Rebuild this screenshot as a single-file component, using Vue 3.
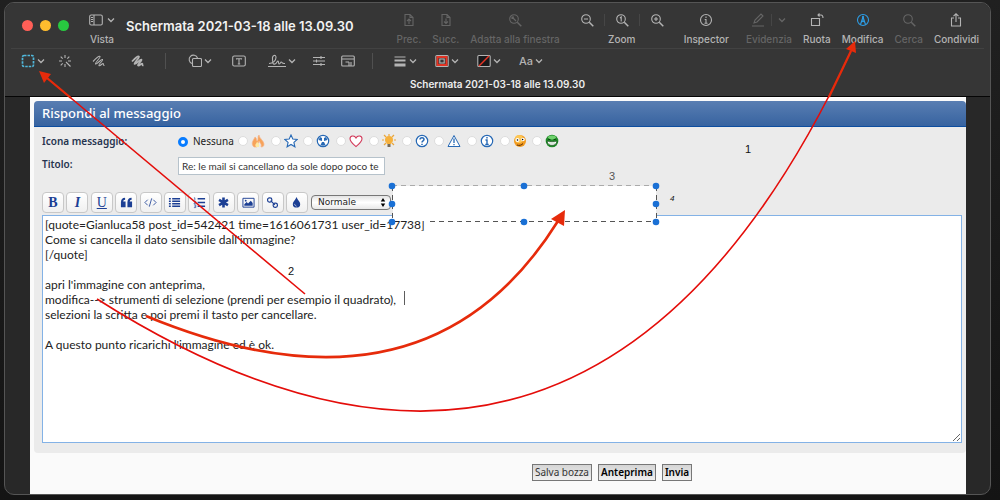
<script setup>
import { ref } from 'vue'

const selected = ref('none')
const title = ref('Re: le mail si cancellano da sole dopo poco te')
const size = ref('Normale')
const message = ref(`[quote=Gianluca58 post_id=542421 time=1616061731 user_id=17738]
Come si cancella il dato sensibile dall'immagine?
[/quote]

apri l'immagine con anteprima,
modifica--> strumenti di selezione (prendi per esempio il quadrato),
selezioni la scritta e poi premi il tasto per cancellare.

A questo punto ricarichi l'immagine ed è ok.`)

const blue = '#2769b5'
const ring = `<circle cx="7" cy="7" r="5.7" fill="#fff" stroke="${blue}" stroke-width="1.2"/>`
const topics = [
  { name: 'Fuoco', art: '<path d="M3 13C-1 9 3 6 4 3c2 1 1 3 2 4 2-1 0-4 2-6 0 3 5 6 5 9 0 2-1 3-3 3 1-3-1-4-2-6 0 3-3 3-2 6z" fill="#f7a35a" stroke="#f6b48a" stroke-width=".7"/><path d="M5 13c-2-3 1-3 1-6 1 3 3 3 2 6z" fill="#fde9a0"/>' },
  { name: 'Stella', art: `<path d="M7 1l1.800 4 4.400.4-3.300 3 1 4.400L7 10.500l-3.900 2.300 1-4.400-3.300-3L5.200 5z" fill="#fff" stroke="${blue}" stroke-width="1.1"/>` },
  { name: 'Radioattivo', art: `${ring}<path d="M2.500 6l1.500-3 2 1v3zM11.500 6L10 3 8 4v3zM4.500 11L6 8h2l1.500 3-2.500.8z" fill="${blue}"/>` },
  { name: 'Cuore', art: '<path d="M7 12.500C4 10 1 8 1 4.800 1 1.500 5.500 1 7 4c1.500-3 6-2.500 6 .8C13 8 10 10 7 12.500z" fill="#fff" stroke="#d23a5a" stroke-width="1.1"/>' },
  { name: 'Idea', art: '<path d="M7 0v2M0 6h2m10 0h2M2 1l2 2m8-2l-2 2M2 11l2-2m8 2l-2-2" stroke="#e9a63c" stroke-width="1.200"/><path d="M5 10C4 8 3 8 3 6a4 4 0 018 0c0 2-1 2-2 4z" fill="#f6b13c"/><path d="M5.500 10h3v3h-3z" fill="#776c59"/>' },
  { name: 'Domanda', art: `${ring}<path d="M5 5.500c0-2.500 4-2.500 4 0C9 7 7 6.800 7 8.500M7 9.800v1.200" fill="none" stroke="${blue}" stroke-width="1.500"/>` },
  { name: 'Attenzione', art: `<path d="M7 1.500L13 12.500H1z" fill="#fff" stroke="${blue}" stroke-width="1"/><path d="M7 4.500v4.500M7 10v1.200" stroke="${blue}" stroke-width="1.300"/>` },
  { name: 'Informazione', art: `${ring}<path d="M7 3v1.500M5.500 6H7v4.500M5.300 10.500h3.400" fill="none" stroke="${blue}" stroke-width="1.400"/>` },
  { name: 'Occhiolino', art: '<circle cx="7" cy="7" r="6" fill="#f19a1f"/><circle cx="6" cy="5" r="4" fill="#fdc757"/><circle cx="4.500" cy="6" r="2" fill="#fff"/><circle cx="10" cy="5.500" r="1.800" fill="#fff"/><circle cx="4.500" cy="6" r=".8"/><circle cx="9.600" cy="5.500" r=".8"/><path d="M4 11c2 1 5 0 6-1.500" stroke="#5a2d05" fill="none"/>' },
  { name: 'Sorriso verde', art: '<circle cx="7" cy="7" r="6.300" fill="#1f8a28"/><ellipse cx="7" cy="3.500" rx="4" ry="2" fill="#6fd16d"/><path d="M3 5l2.500.7M11 5l-2.500.7" stroke="#083b0b"/><path d="M2 7c3 .8 7 .8 10 0-.5 6-9.500 6-10 0z" fill="#fff" stroke="#0b4710" stroke-width=".7"/><path d="M5 7.500v3.500M7 7.500v4M9 7.500v3.500" stroke="#7ba07d" stroke-width=".5"/>' }
]

const navy = '#1c3f94'
const tools = [
  { name: 'Grassetto', text: 'B', cls: 'b' },
  { name: 'Corsivo', text: 'I', cls: 'i' },
  { name: 'Sottolineato', text: 'U', cls: 'u' },
  { name: 'Citazione', art: `<path d="M1 7c0-3 1.500-5 4.500-5v2C4 4 3.500 5 3.500 6H6v6H1zM8 7c0-3 1.500-5 4.500-5v2C11 4 10.500 5 10.500 6H13v6H8z" fill="${navy}"/>` },
  { name: 'Codice', art: `<path d="M4 4L1 7l3 3M10 4l3 3-3 3M8.300 2.500l-2.600 9" fill="none" stroke="${navy}" stroke-width=".9"/>` },
  { name: 'Elenco', art: `<path d="M1 3h2M1 5.700h2M1 8.400h2M1 11h2M4.500 3H13M4.500 5.700H13M4.500 8.400H13M4.500 11H13" stroke="${navy}" stroke-width="1.500"/>` },
  { name: 'Elenco numerato', art: `<path d="M5 3h8M5 7h8M5 11h8" stroke="${navy}" stroke-width="1.700"/><path d="M1 2h1v3M1 6h2L1 8h2M1 9.500h2v3H1M1.500 11H3" stroke="${navy}" stroke-width=".7" fill="none"/>` },
  { name: 'Elemento', art: `<path d="M7 1.500v11M2.200 4.200l9.600 5.600M2.200 9.800l9.600-5.600" stroke="${navy}" stroke-width="2.800"/>` },
  { name: 'Immagine', art: `<path d="M1 2.500h12v9.500H1z" fill="none" stroke="${navy}"/><path d="M2.500 10.500V9L5 6.500 6.500 8 9.500 5l2 2.500v3z" fill="${navy}"/><circle cx="4" cy="5" r="1" fill="${navy}"/>` },
  { name: 'Collegamento', art: `<g fill="none" stroke="${navy}" stroke-width="1.300"><rect x="1.700" y="2" width="4.600" height="4.600" rx="2"/><rect x="7.700" y="7.700" width="4.600" height="4.600" rx="2"/><path d="M5 5l4.500 4.500"/></g>` },
  { name: 'Colore', art: `<path d="M7 1c1 3 4 5 4 7.500a4 4 0 01-8 0C3 6 6 4 7 1z" fill="${navy}"/><path d="M5 8.500C5 10 6 10.500 7 11" stroke="#fff" stroke-width=".7" fill="none"/>` }
]

const page = '<path d="M3 1.500h5l3 3v8H3zM8 1.500v3h3"/>'
const glass = '<circle cx="6" cy="6" r="4.300"/><path d="M9.300 9.300l4 4" stroke-width="1.500"/>'
const actions = [
  { label: 'Prec.', off: true, art: page + '<path d="M7 11V6M5 8l2-2 2 2"/>' },
  { label: 'Succ.', off: true, art: page + '<path d="M7 5.500v5M5 8.500l2 2 2-2"/>' },
  { label: 'Adatta alla finestra', off: true, art: glass + '<path d="M4 4l4 4M4 6V4h2"/>', cls: 'fit' }
]
const later = [
  { label: 'Ruota', art: '<path d="M1.500 5.500h8v7h-8zM8 2h3q2 0 2 3M9.500.5L8 2l1.500 1.500" />' },
  { label: 'Modifica', accent: true, art: '<circle cx="7" cy="7" r="5.500"/><path d="M4.500 11.500L7 4l2.500 7.500M5.500 9l1.500-1 1.500 1"/><path d="M7 3v3.500" stroke-width="1.600"/>' },
  { label: 'Cerca', off: true, art: glass },
  { label: 'Condividi', art: '<path d="M5 5H2.500v8h9V5H9M7 9V1M4.500 3.200L7 .8l2.500 2.400"/>' }
]

const scribble = 'M1 7.500C4 4.500 7 1.500 8 2.500S2.500 9 3.500 10 9.500 4.500 10.500 5.500 6 10.500 7 11.500s3-2 4-2-.5 2 1.500 2'
const markup = [
  { name: 'Selezione', menu: true, cls: 'first', art: '<rect x="1.500" y="1.500" width="11" height="11" rx="1.500" stroke="#50b7da" stroke-width="1.700" stroke-dasharray="2.500 1"/>' },
  { name: 'Alfa istantaneo', cls: 'wand', art: '<path d="M7 1v3M7 10v3M1 7h3M10 7h3M2.700 2.700l2 2M2.700 11.300l2-2M11.300 2.700l-2 2M8 8l4.500 4.500"/>' },
  { name: 'Schizzo', cls: 'sketch', art: `<path d="${scribble}"/>` },
  { name: 'Disegno', cls: 'marker', art: `<path d="${scribble}" stroke-width="1.700"/>` },
  { divider: true },
  { name: 'Forme', menu: true, cls: 'shapes', art: '<path d="M4 9.500A4.300 4.300 0 119.500 4"/><rect x="4.500" y="4.500" width="9" height="8" rx="1"/>' },
  { name: 'Testo', art: '<rect x=".7" y="2" width="12.600" height="10" rx="1.500"/><path d="M4.500 5.500V4.800h5v.7M7 5v5M5.800 10h2.400" />' },
  { name: 'Firma', menu: true, cls: 'sign', box: '0 0 18 14', art: '<path d="M1 9.500c4 0 7-3 7-6C8 0 4 1 4.500 5c.3 3 0 6 2.500 5 2-1 2-3 3-3s0 3 1.300 3 1-2 2-2 .2 2 3.700 1.500M0 12.500h18"/>' },
  { name: 'Regola colore', art: '<path d="M1 3.500h12M1 7h12M1 10.500h12M9 2v3M4.500 5.500v3M9 9v3"/>' },
  { name: 'Dimensioni', cls: 'dims', art: '<rect x=".7" y="2" width="12.600" height="10" rx="1"/><path d="M1 5h12M4.500 8H8M8 8v4M10 8v4"/>' },
  { divider: true },
  { name: 'Stile linea', menu: true, art: '<path d="M1.500 3h11" stroke-width="1"/><path d="M1.500 6.500h11" stroke-width="2"/><path d="M1.500 11h11" stroke-width="3"/>' },
  { name: 'Colore bordo', menu: true, art: '<rect x=".8" y="1.500" width="12.400" height="11" rx="1"/><rect x="2.500" y="3" width="9" height="8" stroke="#e83323" stroke-width="1.900"/><rect x="4.800" y="5" width="4.400" height="4"/>' },
  { name: 'Colore riempimento', menu: true, art: '<rect x=".8" y="1.500" width="12.400" height="11" rx="1" fill="#18191b"/><path d="M2 12L12 2" stroke="#e83323" stroke-width="1.500"/>' },
  { name: 'Stile testo', menu: true, text: 'Aa' }
]

const handles = [[392, 186], [524, 186], [656, 186], [392, 204], [656, 204], [392, 222], [524, 222], [656, 222]]
</script>

<template>
  <div class="desktop">
    <main class="window">
      <header class="chrome">
        <div class="titlebar">
          <div class="lights">
            <button class="light red" aria-label="Chiudi"></button>
            <button class="light yellow" aria-label="Riduci"></button>
            <button class="light green" aria-label="Ingrandisci"></button>
          </div>
          <button class="action view">
            <span class="glyphs">
              <svg class="ico" viewBox="0 0 14 14"><rect x=".7" y="2" width="12.600" height="10" rx="1.500" /><path d="M5 2v10M2 4.500h2M2 6.500h2M2 8.500h2" /></svg>
              <svg class="chev" viewBox="0 0 8 8"><path d="M1 2.500l3 3 3-3" /></svg>
            </span>
            <span>Vista</span>
          </button>
          <h1>Schermata 2021-03-18 alle 13.09.30</h1>
          <div class="actions">
            <button v-for="a in actions" :key="a.label" class="action" :class="[{ off: a.off }, a.cls]">
              <span class="glyphs"><svg class="ico" viewBox="0 0 14 14" v-html="a.art"></svg></span>
              <span>{{ a.label }}</span>
            </button>
            <div class="action zoom">
              <span class="glyphs">
                <button aria-label="Riduci zoom"><svg class="ico" viewBox="0 0 14 14" v-html="glass + '<path d=&quot;M4 6h4&quot;/>'"></svg></button>
                <i></i>
                <button aria-label="Dimensione reale"><svg class="ico" viewBox="0 0 14 14" v-html="glass + '<path d=&quot;M5 5l1.200-1v4.500&quot;/>'"></svg></button>
                <i></i>
                <button aria-label="Aumenta zoom"><svg class="ico" viewBox="0 0 14 14" v-html="glass + '<path d=&quot;M4 6h4M6 4v4&quot;/>'"></svg></button>
              </span>
              <span>Zoom</span>
            </div>
            <button class="action inspector">
              <span class="glyphs"><svg class="ico" viewBox="0 0 14 14"><circle cx="7" cy="7" r="5.500" /><path d="M7 3.500V5M5.700 6.500H7V10M5.500 10.200h3" /></svg></span>
              <span>Inspector</span>
            </button>
            <button class="action off mark">
              <span class="glyphs">
                <svg class="ico" viewBox="0 0 14 14"><path d="M3 10l1-3 6-6 2 2-6 6zM1 13h12" /></svg>
                <i></i>
                <svg class="chev" viewBox="0 0 8 8"><path d="M1 2.500l3 3 3-3" /></svg>
              </span>
              <span>Evidenzia</span>
            </button>
            <button v-for="a in later" :key="a.label" class="action" :class="{ off: a.off, accent: a.accent }">
              <span class="glyphs"><svg class="ico" viewBox="0 0 14 14" v-html="a.art"></svg></span>
              <span>{{ a.label }}</span>
            </button>
          </div>
        </div>
        <div class="markup">
          <template v-for="(m, n) in markup" :key="n">
            <i v-if="m.divider" class="divider"></i>
            <button v-else :class="m.cls" :aria-label="m.name">
              <span v-if="m.text">{{ m.text }}</span>
              <svg v-else class="ico" :viewBox="m.box || '0 0 14 14'" v-html="m.art"></svg>
              <svg v-if="m.menu" class="chev" viewBox="0 0 8 8"><path d="M1 2.500l3 3 3-3" /></svg>
            </button>
          </template>
        </div>
        <p class="docname">Schermata 2021-03-18 alle 13.09.30</p>
      </header>

      <form class="sheet" @submit.prevent>
        <section class="panel">
          <h2>Rispondi al messaggio</h2>
          <div class="fields">
            <div class="row icons" role="radiogroup" aria-labelledby="icon-label">
              <span id="icon-label" class="name">Icona messaggio:</span>
              <label class="none"><input v-model="selected" type="radio" name="icon" value="none" />Nessuna</label>
              <div class="topics">
                <label v-for="t in topics" :key="t.name">
                  <input v-model="selected" type="radio" name="icon" :value="t.name" :aria-label="t.name" />
                  <svg viewBox="0 0 14 14" v-html="t.art"></svg>
                </label>
              </div>
            </div>
            <div class="row subject">
              <label class="name" for="subject">Titolo:</label>
              <input id="subject" v-model="title" type="text" />
            </div>
            <div class="editor-bar">
              <div class="tools">
                <button v-for="t in tools" :key="t.name" type="button" :class="t.cls" :aria-label="t.name">
                  <template v-if="t.text">{{ t.text }}</template>
                  <svg v-else viewBox="0 0 14 14" v-html="t.art"></svg>
                </button>
              </div>
              <label class="size">
                <select v-model="size" aria-label="Dimensione testo"><option>Normale</option></select>
                <svg viewBox="0 0 6 10"><path d="M3 0l2.500 4h-5zM3 10l2.500-4h-5z" /></svg>
              </label>
            </div>
            <textarea v-model="message" aria-label="Messaggio" spellcheck="false"></textarea>
          </div>
        </section>
        <div class="submit">
          <button type="button">Salva bozza</button>
          <button type="button" class="strong">Anteprima</button>
          <button type="submit" class="strong">Invia</button>
        </div>
      </form>
    </main>

    <svg class="notes" viewBox="0 0 1000 500" width="1000" height="500" aria-hidden="true">
      <rect x="393" y="186" width="263" height="35" fill="#fff" />
      <path d="M392 185.500h265" stroke="#aaa" stroke-dasharray="5 4" />
      <path d="M430 221.500h227M392.500 186v36M656.500 186v36" stroke="#555" stroke-dasharray="5 4" />
      <circle v-for="(h, n) in handles" :key="n" :cx="h[0]" :cy="h[1]" r="3.300" fill="#1a70d5" />
      <path d="M404.500 291v14" stroke="#333" stroke-width=".8" />
      <path d="M305 294L47 78" stroke="#e40d0a" stroke-width="1.600" />
      <path d="M71 98L47 78" stroke="#e62b0b" stroke-width="2.200" />
      <path d="M39 71l12 3-7 9z" fill="#e62b0b" />
      <path d="M97 299Q590 612 851 51" fill="none" stroke="#e40d0a" stroke-width="1.600" />
      <path d="M829 97L851 51" stroke="#e62b0b" stroke-width="2.200" />
      <path d="M855 41l-9 8 10 4z" fill="#e62b0b" />
      <path d="M146 316Q426 432 558 221" fill="none" stroke="#e62b0b" stroke-width="2.600" />
      <path d="M565 210l-14 9 13 7z" fill="#e62b0b" />
      <g class="digits">
        <text x="745" y="153">1</text>
        <text x="288" y="275">2</text>
        <text x="609" y="180" class="faint">3</text>
        <text x="670" y="201" class="small">4</text>
      </g>
    </svg>
  </div>
</template>

<style>
html, body { margin: 0; background: #1b1b1b; }
</style>

<style scoped>
* { box-sizing: border-box; }
button { margin: 0; padding: 0; border: 0; background: none; color: inherit; font: inherit; }
.desktop { position: relative; min-height: 100vh; padding: 2px 9px 5px 4px; display: flex; background: linear-gradient(#202020, #141414); overflow: hidden; }
.window { flex: 1; display: flex; flex-direction: column; border: 1px solid #555; border-radius: 10px; background: #282828; overflow: hidden; }
.chrome { background: #363636; color: #b4b4b4; font: 500 10px/12px Inter, "Liberation Sans", sans-serif; border-bottom: 1px solid #050505; }
.titlebar { display: flex; align-items: center; height: 45px; padding: 0 11px 0 17px; }
.lights { display: flex; gap: 7px; }
.light { width: 11px; height: 11px; border-radius: 50%; }
.red { background: #ff5f57; }
.yellow { background: #febc2e; }
.green { background: #28c840; }
.action { display: flex; flex-direction: column; align-items: center; gap: 6px; white-space: nowrap; }
.view { margin-left: 20px; }
.glyphs { display: flex; align-items: center; gap: 4px; height: 14px; }
.titlebar .action { padding-top: 7px; }
.ico { width: 14px; height: 14px; fill: none; stroke: currentColor; stroke-width: 1.1; display: block; }
.chev { width: 8px; height: 8px; fill: none; stroke: currentColor; stroke-width: 1.3; }
h1 { margin: 0 0 0 11px; color: #f2f2f2; font-size: 13px; line-height: 20px; font-weight: 600; white-space: nowrap; }
.actions { display: flex; gap: 11px; margin-left: auto; }
.off { color: #656565; }
.accent .ico { color: #2d9fe8; }
.zoom { margin: 0 9px; }
.zoom .glyphs { gap: 10px; }
.glyphs i { width: 1px; height: 12px; background: #464646; }
.mark { margin-left: 6px; }
.mark .glyphs { gap: 6px; }
.markup { display: flex; align-items: center; gap: 18px; height: 25px; margin: 0 6px; padding-left: 10px; border-top: 1px solid #424242; }
.markup button { display: flex; align-items: center; gap: 2px; font-size: 11px; }
.markup .first { margin-right: -5px; }
.markup .sketch { margin-left: 2px; }
.markup .marker { margin-left: 7px; }
.markup .shapes { margin: 0 2px; }
.markup .sign { margin: 0 -2px 0 4px; }
.sign .ico { width: 18px; }
.markup .dims { margin: 0 -3px; }
.divider { width: 1px; height: 16px; margin: 0 2px; background: #505050; }
.docname { margin: 0; padding: 5px 0 6px; text-align: center; color: #ededed; font-weight: 600; line-height: 12px; }
.sheet { flex: 1; display: flex; flex-direction: column; margin: 0 24px 0 25px; padding: 3px 0 0 4px; background: #fafafa; border-top: 1px solid #fff; color: #222; font: 10px/15px "Noto Sans", "DejaVu Sans", sans-serif; }
.panel { flex: 1; display: flex; flex-direction: column; background: #ebebeb; border-radius: 4px; }
h2 { margin: 0; padding: 4px 8px; border-bottom: 1px solid #0c4da0; border-radius: 4px 4px 0 0; background: linear-gradient(#597eb2, #3763a0); color: #fff; font-size: 13px; line-height: 17px; font-weight: 500; }
.fields { flex: 1; display: flex; flex-direction: column; padding: 7px 4px 10px 8px; }
.row { display: flex; align-items: flex-start; }
.name { flex: 0 0 136px; color: #26344f; font-weight: 600; }
.none { display: flex; align-items: center; gap: 5px; width: 60px; }
input[type="radio"] { appearance: none; flex: none; width: 10px; height: 10px; margin: 0; border: 1px solid #ddd; border-radius: 50%; background: #fff; }
input[type="radio"]:checked { border: 3px solid #087cff; }
.topics { display: grid; grid-template-columns: repeat(10, 1fr); width: 327px; }
.topics label { display: flex; align-items: center; gap: 3px; }
.topics svg { width: 14px; height: 14px; }
.subject { height: 37px; padding-top: 8px; }
#subject { width: 207px; height: 18px; padding: 0 2px 0 3px; border: 1px solid #b6c2cb; background: #fff; color: #333; font: 10px/15px Lato, sans-serif; }
.editor-bar { display: flex; align-items: center; gap: 3px; margin: 6px 0 2px; }
.tools { display: flex; justify-content: space-between; width: 266px; }
.tools button { display: grid; place-items: center; width: 22px; height: 21px; border: 1px solid #c8c8c8; border-radius: 4px; background: linear-gradient(#fff, #f0f0f0); color: #1c3f94; font: 14px/16px "Liberation Serif", serif; }
.tools svg { width: 13px; height: 13px; }
.tools .b { font-weight: bold; }
.tools .i { font-style: italic; font-weight: bold; }
.tools .u { text-decoration: underline; }
.size { position: relative; display: flex; }
.size select { appearance: none; width: 80px; height: 15px; padding: 0 6px; border: 1px solid #777; border-radius: 4px; background: linear-gradient(#e4e4e4, #fff 50%, #e8e8e8); color: #222; font: 9px/13px "DejaVu Sans", sans-serif; }
.size svg { position: absolute; right: 5px; top: 3px; width: 6px; height: 9px; }
textarea { flex: 1; width: 100%; margin: 0; padding: 1px 2px; border: 1px solid #83b2e6; outline: 0; background: #fff; color: #222; font: 12px/15px Lato, "Noto Sans", sans-serif; resize: both; }
.submit { display: flex; justify-content: center; gap: 6px; padding: 11px 0 13px 224px; }
.submit button { height: 17px; padding: 0 2px; border: 1px solid #777; background: linear-gradient(#d5d5d5, #f0f0f0); color: #333; line-height: 15px; }
.submit .strong { color: #000; font-weight: 600; }
.notes { position: absolute; left: 0; top: 0; pointer-events: none; }
.digits { font: 11px "Liberation Sans", sans-serif; fill: #111; }
.faint { fill: #555; }
.small { font-size: 8px; font-style: italic; }
</style>
